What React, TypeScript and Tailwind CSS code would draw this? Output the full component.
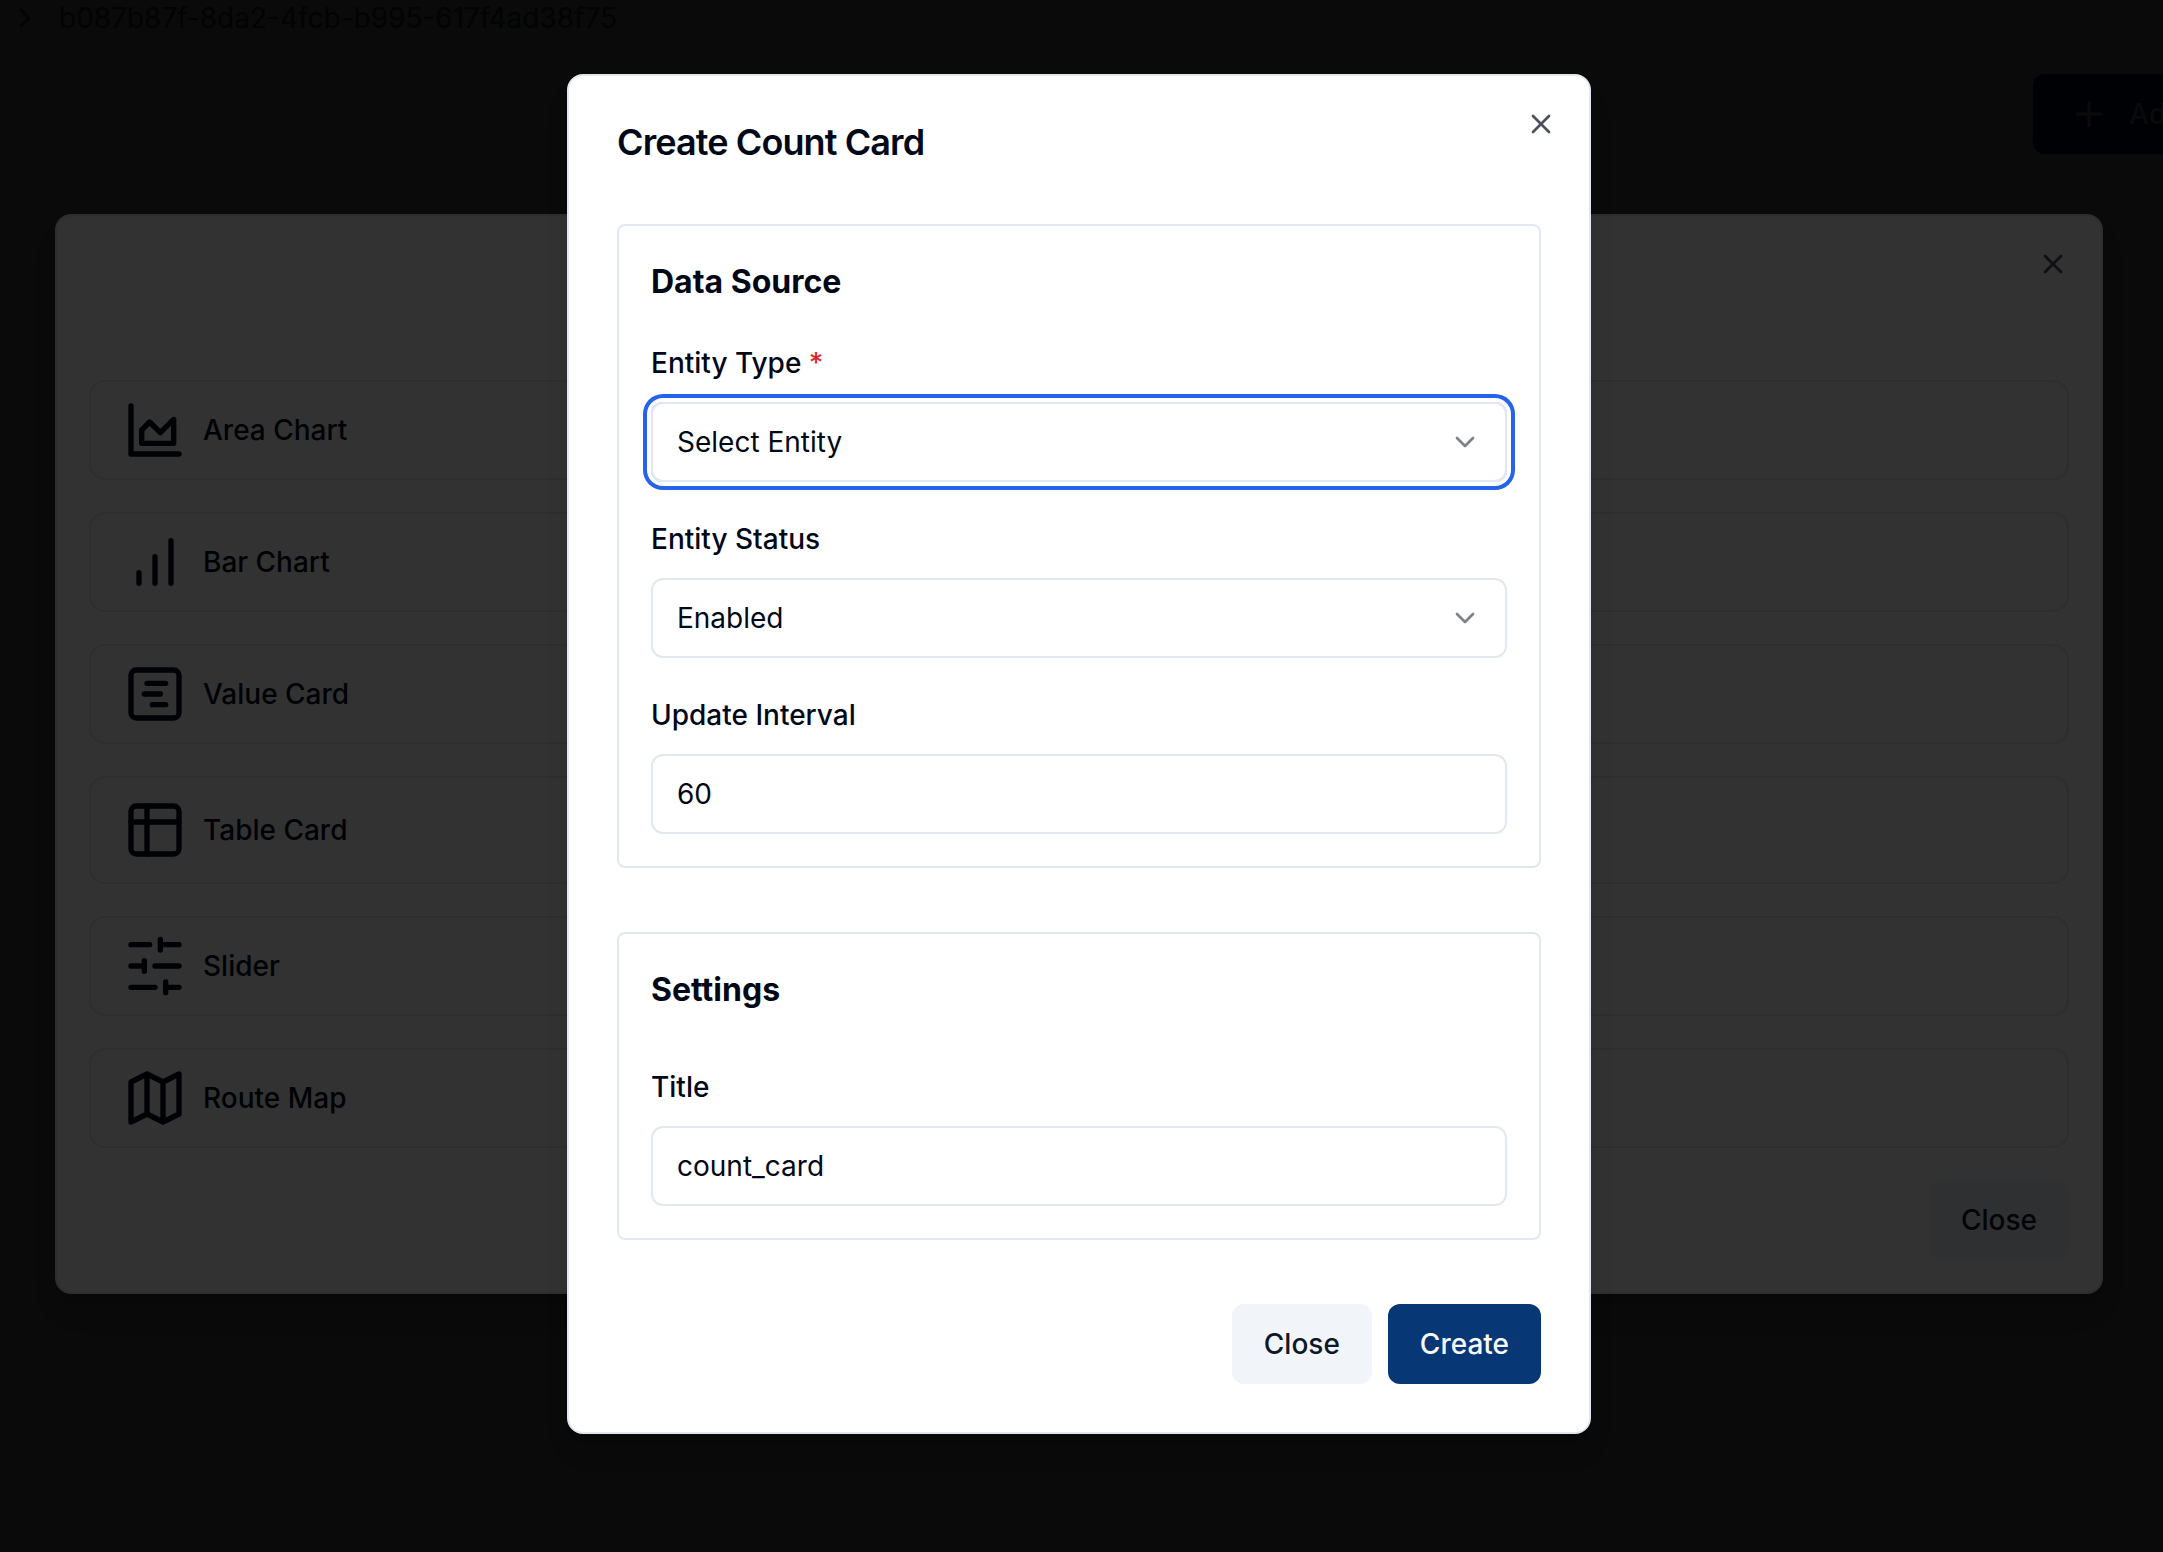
import React from "react";
import { ChevronDown, ChevronRight, Plus, X } from "lucide-react";

function Glyph({ children }: { children: React.ReactNode }) {
  return (
    <svg
      viewBox="0 0 24 24"
      fill="none"
      stroke="currentColor"
      strokeWidth={2}
      strokeLinecap="round"
      strokeLinejoin="round"
      className="h-16 w-16 shrink-0"
    >
      {children}
    </svg>
  );
}

const widgets = [
  {
    name: "Area Chart",
    height: "h-[100px]",
    icon: (
      <>
        <path d="M3 3v18h18" />
        <path d="M7 12v5h12V8l-5 5-4-4Z" />
      </>
    ),
  },
  {
    name: "Bar Chart",
    height: "h-[100px]",
    icon: <path d="M6 20v-4M12 20V10M18 20V4" />,
  },
  {
    name: "Value Card",
    height: "h-[100px]",
    icon: (
      <>
        <rect width="18" height="18" x="3" y="3" rx="2" />
        <path d="M9 8h7M8 12h6M11 16h5" />
      </>
    ),
  },
  {
    name: "Table Card",
    height: "h-[108px]",
    icon: (
      <>
        <rect width="18" height="18" x="3" y="3" rx="2" />
        <path d="M3 9h18M9 3v18" />
      </>
    ),
  },
  {
    name: "Slider",
    height: "h-[100px]",
    icon: <path d="M21 4h-7M10 4H3M21 12h-9M8 12H3M21 20h-5M12 20H3M14 2v4M8 10v4M16 18v4" />,
  },
  {
    name: "Route Map",
    height: "h-[100px]",
    icon: <path d="M3 6l6-3 6 3 6-3v15l-6 3-6-3-6 3zM9 3v15M15 6v15" />,
  },
];

function PageHeader() {
  return (
    <header>
      <div className="flex h-9 items-center pl-[9px]">
        <ChevronRight className="h-8 w-8 text-[#020303]" />
        <span className="ml-[18px] text-[28px] leading-9 text-[#020303]">
          b087b87f-8da2-4fcb-b995-617f4ad38f75
        </span>
      </div>
      <div className="mt-[38px] flex pl-[2033px]">
        <button className="flex h-20 shrink-0 items-center rounded-xl bg-[#000105] pl-9 pr-8 text-[28px] font-medium text-[#0a0a0a]">
          <Plus className="mr-5 h-10 w-10" />
          Add
        </button>
      </div>
    </header>
  );
}

function WidgetPicker() {
  return (
    <section className="absolute left-[55px] top-[214px] flex h-[1080px] w-[2048px] flex-col rounded-2xl border-2 border-[#2d2e30] bg-[#323232] px-8 pb-8 pt-[164px] text-[#000205] shadow-[0_20px_30px_-6px_rgb(0_0_0/0.1),0_8px_12px_-8px_rgb(0_0_0/0.1)]">
      <X className="absolute right-8 top-8 h-8 w-8 text-[#0f1013]" />
      <ul className="flex flex-col gap-8">
        {widgets.map((w) => (
          <li
            key={w.name}
            className={`flex items-center gap-4 rounded-2xl border-2 border-[#2d2e2f] px-8 ${w.height}`}
          >
            <Glyph>{w.icon}</Glyph>
            <span className="text-[28px] font-medium leading-10">{w.name}</span>
          </li>
        ))}
      </ul>
      <div className="mt-8 flex justify-end">
        <button className="h-20 rounded-xl bg-[#2f3031] px-8 text-[28px] font-medium text-[#030508]">
          Close
        </button>
      </div>
    </section>
  );
}

function Field({
  label,
  value,
  required,
  select,
  focused,
}: {
  label: string;
  value: string;
  required?: boolean;
  select?: boolean;
  focused?: boolean;
}) {
  return (
    <div>
      <div className="text-[32px] leading-[48px]">
        <label className="text-[28px] font-medium leading-7">
          {label}
          {required && <span className="text-[#dc2626]"> *</span>}
        </label>
      </div>
      <div
        className={`mt-4 flex h-20 items-center justify-between rounded-xl border-2 border-[#e2e8f0] px-6 ${
          focused ? "shadow-[0_0_0_4px_#ffffff,0_0_0_8px_#2563eb]" : ""
        }`}
      >
        <span className="text-[28px] leading-10">{value}</span>
        {select && <ChevronDown className="h-8 w-8 opacity-50" />}
      </div>
    </div>
  );
}

function CreateCardDialog() {
  return (
    <section className="absolute left-[567px] top-[74px] flex h-[1360px] w-[1024px] flex-col gap-16 rounded-2xl border-2 border-[#e2e8f0] bg-white p-12 text-[#020817] shadow-[0_20px_30px_-6px_rgb(0_0_0/0.1),0_8px_12px_-8px_rgb(0_0_0/0.1)]">
      <X className="absolute right-8 top-8 h-8 w-8 opacity-70" />
      <h2 className="text-[36px] font-semibold leading-9 tracking-tight">Create Count Card</h2>
      <div className="flex flex-col gap-8 rounded-lg border-2 border-[#e2e8f0] p-8">
        <h3 className="text-[32px] font-bold leading-[48px]">Data Source</h3>
        <Field label="Entity Type" value="Select Entity" required select focused />
        <Field label="Entity Status" value="Enabled" select />
        <Field label="Update Interval" value="60" />
      </div>
      <div className="flex flex-col gap-12 rounded-lg border-2 border-[#e2e8f0] p-8">
        <h3 className="text-[32px] font-bold leading-[48px]">Settings</h3>
        <Field label="Title" value="count_card" />
      </div>
      <div className="flex justify-end gap-4 text-[28px] font-medium">
        <button className="h-20 rounded-xl bg-[#f1f5f9] px-8 text-[#0f172a]">Close</button>
        <button className="h-20 rounded-xl bg-[#083776] px-8 text-[#f8fafc]">Create</button>
      </div>
    </section>
  );
}

export default function App() {
  return (
    <main className="relative h-[1552px] w-[2163px] overflow-hidden bg-[#0a0a0a] font-['Inter',sans-serif]">
      <PageHeader />
      <WidgetPicker />
      <CreateCardDialog />
    </main>
  );
}
